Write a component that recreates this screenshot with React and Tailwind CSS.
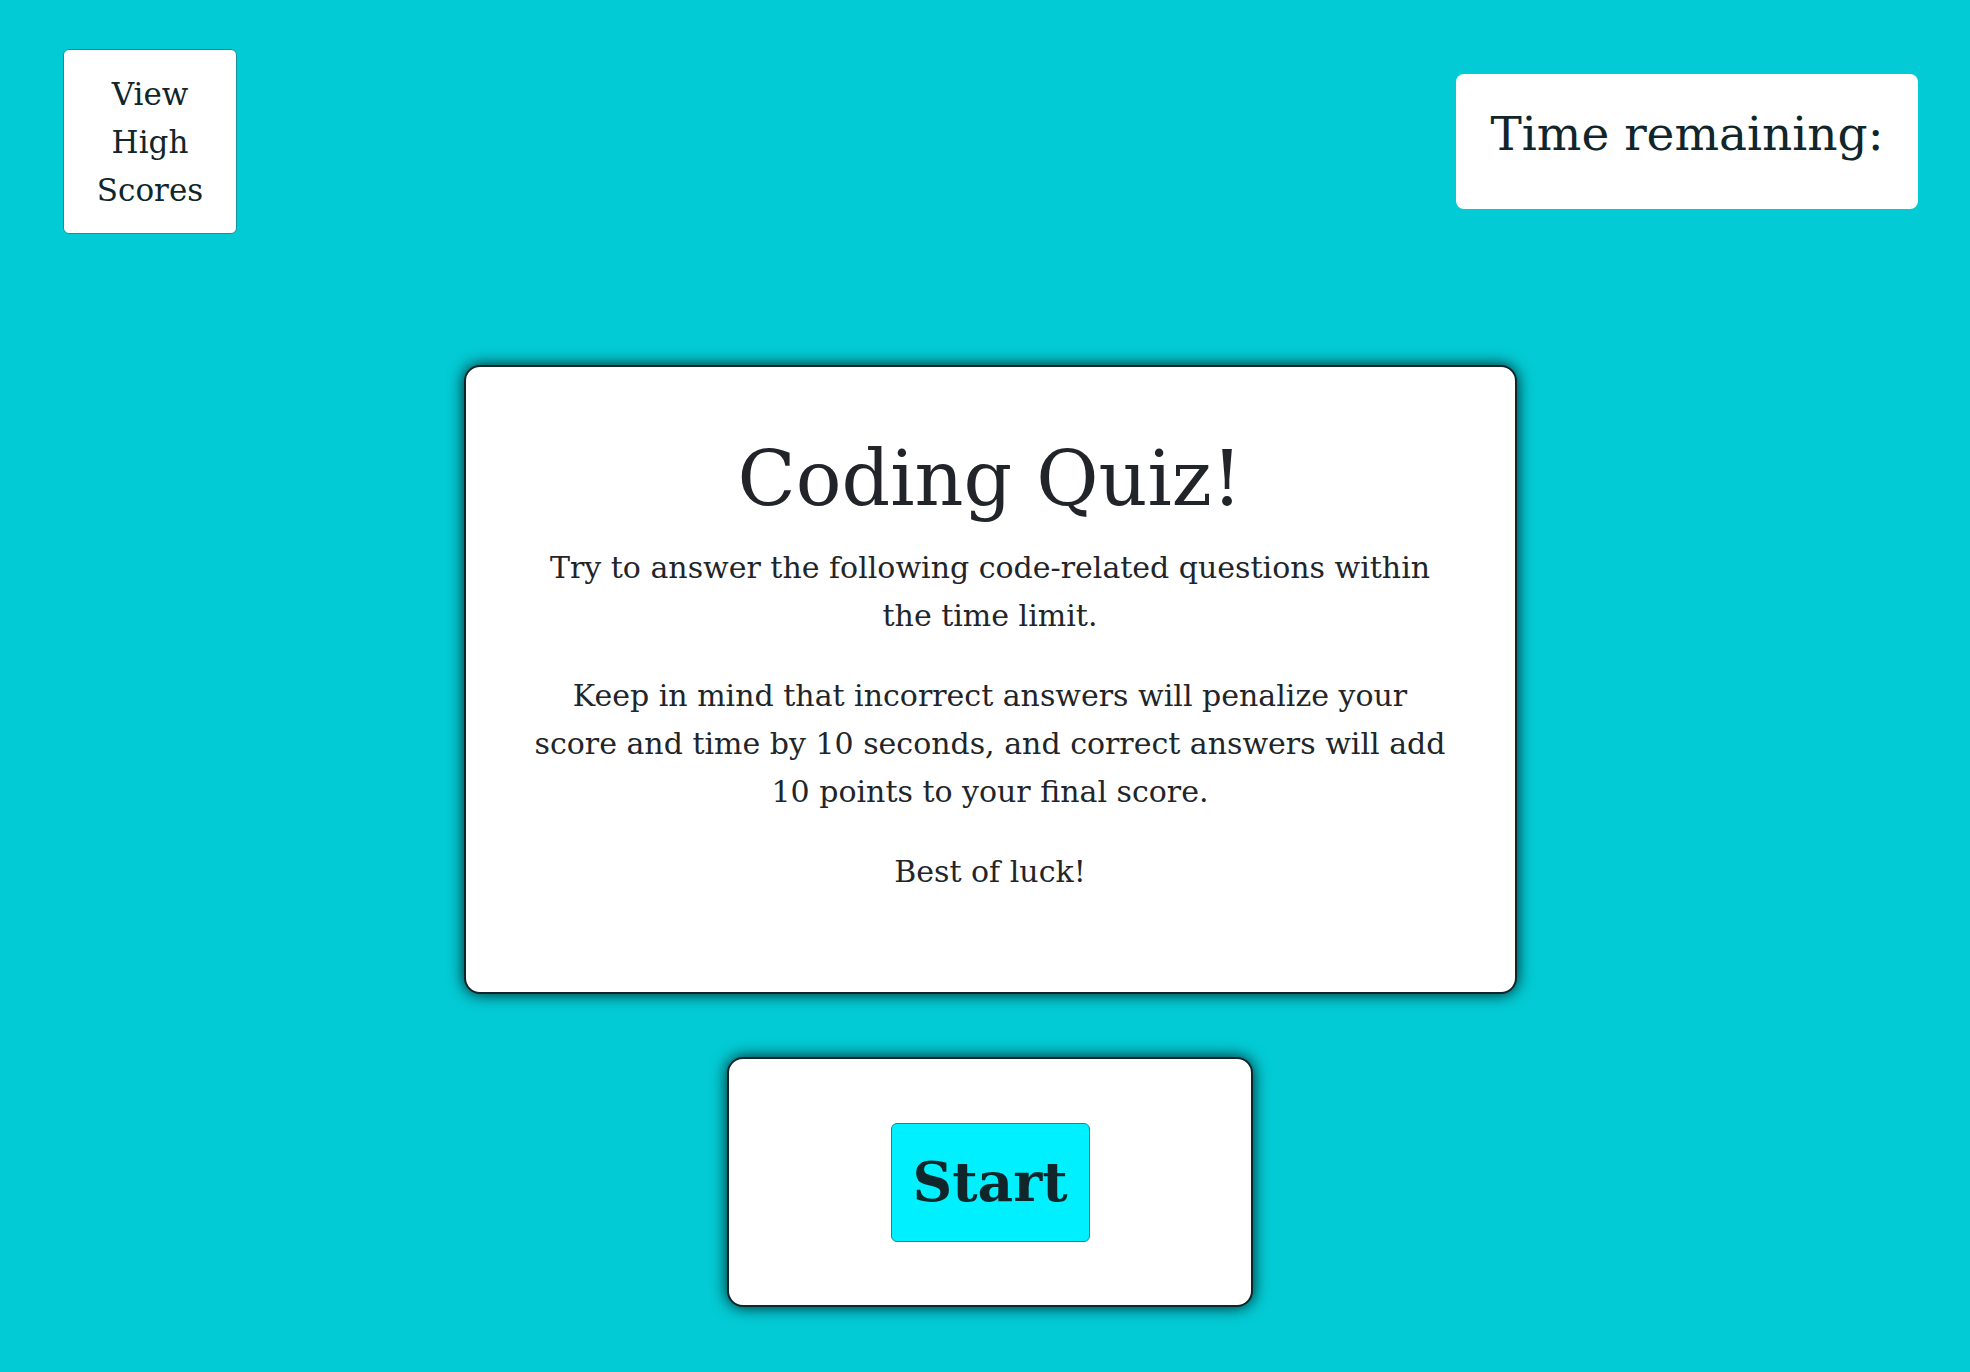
export default function App() {
  return (
    <div className="min-h-screen bg-[#03cbd5] font-['DejaVu_Serif',serif] pb-16">
      <header className="flex items-start justify-between pl-[63px] pr-[52px] pt-[49px]">
        <button className="flex h-[185px] w-[174px] flex-col items-center justify-center rounded-md border border-[#13939b] bg-white text-[31px] leading-[48px] text-[#10262a]">
          <span>View</span>
          <span>High</span>
          <span>Scores</span>
        </button>
        <div className="mt-[25px] flex h-[135px] w-[462px] items-center justify-center rounded-lg bg-white pb-[14px] text-[47px] text-[#10262a]">
          Time remaining:
        </div>
      </header>

      <main className="flex flex-col items-center pl-[10px]">
        <section className="mt-[131px] w-[1053px] rounded-2xl border-2 border-[#10262a] bg-white p-16 text-center text-[#212529] shadow-[0_0_16px_rgba(0,0,0,0.85)]">
          <h1 className="text-[76px] leading-[96px]">Coding Quiz!</h1>
          <p className="mt-[17px] mb-8 text-[30px] leading-[48px]">
            Try to answer the following code-related questions within the time
            limit.
          </p>
          <p className="mb-8 text-[30px] leading-[48px]">
            Keep in mind that incorrect answers will penalize your score and time
            by 10 seconds, and correct answers will add 10 points to your final
            score.
          </p>
          <p className="mb-8 text-[30px] leading-[48px]">Best of luck!</p>
        </section>

        <section className="mt-[63px] flex h-[250px] w-[526px] items-center justify-center rounded-2xl border-2 border-[#10262a] bg-white shadow-[0_0_16px_rgba(0,0,0,0.85)]">
          <button className="h-[119px] w-[199px] rounded-md border border-[#0d8f99] bg-[#00f0ff] text-[55px] font-bold text-[#10262a]">
            Start
          </button>
        </section>
      </main>
    </div>
  );
}
